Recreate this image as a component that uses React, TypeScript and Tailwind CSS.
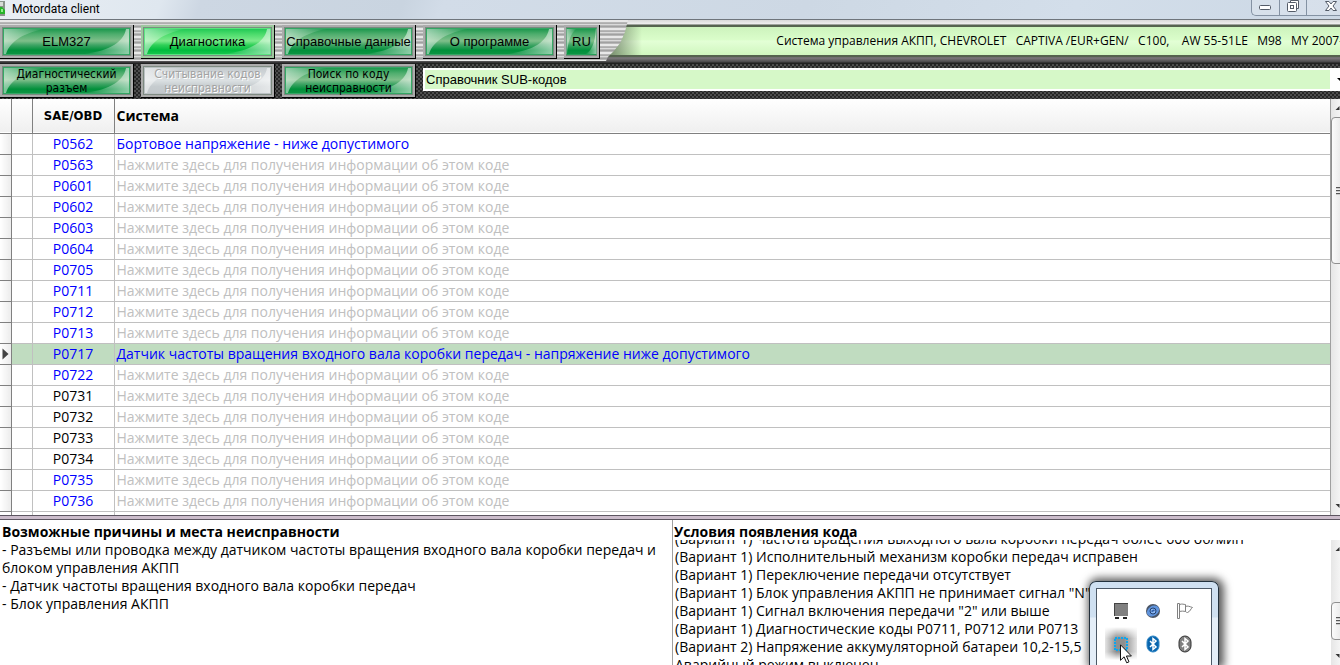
import React from "react";
import clsx from "clsx";

const HINT = "Нажмите здесь для получения информации об этом коде";

interface Row {
  code: string;
  text?: string;
  dark?: boolean;
  selected?: boolean;
}

const rows: Row[] = [
  { code: "P0562", text: "Бортовое напряжение - ниже допустимого" },
  { code: "P0563" },
  { code: "P0601" },
  { code: "P0602" },
  { code: "P0603" },
  { code: "P0604" },
  { code: "P0705" },
  { code: "P0711" },
  { code: "P0712" },
  { code: "P0713" },
  {
    code: "P0717",
    text: "Датчик частоты вращения входного вала коробки передач - напряжение ниже допустимого",
    selected: true,
  },
  { code: "P0722" },
  { code: "P0731", dark: true },
  { code: "P0732", dark: true },
  { code: "P0733", dark: true },
  { code: "P0734", dark: true },
  { code: "P0735" },
  { code: "P0736" },
];

const causes = [
  "- Разъемы или проводка между датчиком частоты вращения входного вала коробки передач и блоком управления АКПП",
  "- Датчик частоты вращения входного вала коробки передач",
  "- Блок управления АКПП",
];

const conditions = [
  "(Вариант 1) Частота вращения выходного вала коробки передач более 600 об/мин",
  "(Вариант 1) Исполнительный механизм коробки передач исправен",
  "(Вариант 1) Переключение передачи отсутствует",
  '(Вариант 1) Блок управления АКПП не принимает сигнал "N"',
  '(Вариант 1) Сигнал включения передачи "2" или выше',
  "(Вариант 1) Диагностические коды P0711, P0712 или P0713",
  "(Вариант 2) Напряжение аккумуляторной батареи 10,2-15,5",
  "Аварийный режим выключен",
];

const tones = {
  green: "bg-[linear-gradient(#0a8f40,#4fae6e_25%,#7fbf8a_48%,#3fa465_62%,#00903a_80%,#149647)]",
  active: "bg-[linear-gradient(#12c24c,#4cdc6c_25%,#7eea8c_48%,#2fd058_62%,#00bc3c_80%,#22cc55)]",
  disabled: "bg-[linear-gradient(#c2c8cb,#d2d7da_30%,#dbe0e2_50%,#c6cccf_70%,#c0c6ca)]",
};

interface GlossButtonProps {
  children: React.ReactNode;
  tone?: keyof typeof tones;
  className?: string;
  small?: boolean;
}

function GlossButton({ children, tone = "green", className, small }: GlossButtonProps) {
  return (
    <button
      disabled={tone === "disabled"}
      className={clsx("flex h-[34px] shrink-0 border-r border-b border-black", className)}
    >
      <span
        className={clsx(
          "relative flex h-full w-full items-center justify-center overflow-hidden border-2 pt-px shadow-[inset_0_0_0_1px_#7d8a80]",
          tone === "active" ? "border-[#9fc79f]" : "border-[#acacac]",
          tones[tone]
        )}
      >
        <svg
          viewBox="0 0 130 30"
          preserveAspectRatio="none"
          className="absolute inset-0 h-full w-full"
          aria-hidden="true"
        >
          <defs>
            <linearGradient id={`left-${tone}`} x1="0" x2="1">
              <stop offset="0" stopColor="#fff" stopOpacity="0.5" />
              <stop offset="1" stopColor="#fff" stopOpacity="0" />
            </linearGradient>
            <linearGradient id={`right-${tone}`} x1="0" x2="1">
              <stop offset="0" stopColor="#fff" stopOpacity="0" />
              <stop offset="1" stopColor="#fff" stopOpacity="0.55" />
            </linearGradient>
          </defs>
          <path d="M2 28V2h42C24 5 8 14 4 28z" fill={`url(#left-${tone})`} />
          <path d="M128 2v26H82c22-3 40-10 43-26z" fill={`url(#right-${tone})`} />
          <path
            d="M1.500 1.500h127v27h-127z"
            fill="none"
            stroke={tone === "disabled" ? "#b9bfc2" : tone === "active" ? "#5fe583" : "#36a866"}
          />
        </svg>
        <span
          className={clsx(
            "relative whitespace-nowrap",
            small
              ? "text-center font-['DejaVu_Sans_Condensed','DejaVu_Sans',sans-serif] text-[12px] leading-[14px]"
              : "font-['Liberation_Sans',Arial,sans-serif] text-[13px] leading-4",
            tone === "disabled" ? "text-[#a3a3a3] [text-shadow:1px_1px_0_#fff]" : "text-black"
          )}
        >
          {children}
        </span>
      </span>
    </button>
  );
}

function Scrollbar({ thumb }: { thumb: string }) {
  return (
    <div className="flex w-[9px] shrink-0 flex-col overflow-hidden bg-[linear-gradient(90deg,#e6e6e6,#f4f4f4)]">
      <svg width="9" height="18" viewBox="0 0 9 18" className="shrink-0">
        <path d="M4.500 11l4-4v4z" fill="#333" />
      </svg>
      <div
        className={clsx(
          "flex w-4 shrink-0 items-center rounded-sm border border-[#8f8f8f] bg-[linear-gradient(90deg,#fbfbfb,#e0e0e0)] pl-1",
          thumb
        )}
      >
        <svg width="8" height="8" viewBox="0 0 8 8">
          <path d="M0 .5h8M0 3.500h8M0 6.500h8" stroke="#555" />
          <path d="M0 1.500h8M0 4.500h8M0 7.500h8" stroke="#ccc" />
        </svg>
      </div>
      <svg width="9" height="18" viewBox="0 0 9 18" className="mt-auto shrink-0">
        <path d="M4.500 7l4 4V7z" fill="#333" />
      </svg>
    </div>
  );
}

function TitleBar() {
  return (
    <header className="flex h-5 shrink-0 items-start justify-between border-b border-[#6f757c] bg-[linear-gradient(110deg,#e9eef4_0,#dfe7ef_12%,#cdd7e3_15%,#c9d4e0_30%,#d2dce8_33%,#cdd8e4_60%,#d3deea_80%,#ccd8e5)]">
      <div className="flex items-center">
        <svg width="6" height="18" viewBox="0 0 6 18">
          <path d="M0 1h5v15H0z" fill="#8a948c" />
          <path d="M0 2h3v4H0z" fill="#d7dcd7" />
          <path d="M0 7h2l3 3v4H0z" fill="#27b32a" />
          <path d="M1 9h2v3H1z" fill="#8ff08a" />
        </svg>
        <h1 className="pl-[6px] font-[Roboto,'Open_Sans',sans-serif] text-[12px] leading-[18px] text-black">
          Motordata client
        </h1>
      </div>
      <div className="flex h-4 rounded-bl-[5px] border-b border-l border-[#8492a3] bg-white/20">
        <button aria-label="Свернуть" className="flex w-7 items-center justify-center border-r border-[#8492a3]">
          <svg width="13" height="6" viewBox="0 0 13 6">
            <rect x=".5" y=".5" width="11" height="4" rx="1" fill="#fff" stroke="#545c68" />
          </svg>
        </button>
        <button aria-label="Восстановить" className="flex w-[27px] items-start justify-center border-r border-[#8492a3]">
          <svg width="12" height="13" viewBox="0 0 12 13">
            <path d="M3.500 2.500v-2h8v8h-2" fill="#fff" stroke="#545c68" />
            <rect x=".5" y="2.500" width="9" height="9" rx="1" fill="#fff" stroke="#545c68" />
            <rect x="3.500" y="5.500" width="3" height="3" fill="#fff" stroke="#545c68" />
          </svg>
        </button>
        <button aria-label="Закрыть" className="flex w-[33px] items-start justify-end pr-[3px]">
          <svg width="12" height="12" viewBox="0 0 12 12">
            <path
              d="M.5 1.500h3.500l2 2.500 2-2.500h3.500L8 6l3.500 4.500H8L6 8l-2 2.500H.5L4 6z"
              fill="#fff"
              stroke="#545c68"
            />
          </svg>
        </button>
      </div>
    </header>
  );
}

function MainToolbar() {
  return (
    <div className="flex h-11 shrink-0 bg-[linear-gradient(#d9d9d9_0,#efefef_4px,#4f564c_5px,#6d7768_7px,#555_36px,#7c7a7c_38px,#4a484a_42px,#222_43px)]">
      <nav className="relative z-10 flex h-[41px] shrink-0 items-start gap-[7px] bg-[repeating-linear-gradient(#e8e8e8_0,#e8e8e8_2px,#bcbcbc_2px,#a8a8a8_4px,#dadada_4px,#dadada_5px,#969696_6px,#c2c2c2_8px)] pt-[5px] pr-7 [clip-path:polygon(0_0,100%_0,99.5%_30%,98.8%_55%,97.8%_75%,96.8%_90%,96.5%_100%,0_100%)]">
        <GlossButton className="w-[134px]">ELM327</GlossButton>
        <GlossButton className="w-[134px]" tone="active">Диагностика</GlossButton>
        <GlossButton className="w-[134px]">Справочные данные</GlossButton>
        <GlossButton className="w-[134px]">О программе</GlossButton>
        <GlossButton className="w-9">RU</GlossButton>
      </nav>
      <div className="mt-[5px] -ml-5 flex h-8 min-w-0 flex-1 items-center justify-end overflow-hidden border-y-2 border-[#55634f] bg-[linear-gradient(90deg,#00000066_4px,#0000_34px),linear-gradient(#cdf3bd,#dafdca_45%,#e3ffd6_50%,#d0f7bf)]">
        <p className="-mr-[3px] text-[12px] leading-5 whitespace-pre text-black">
          {"Система управления АКПП, CHEVROLET   CAPTIVA /EUR+GEN/   C100,    AW 55-51LE   M98   MY 2007-"}
        </p>
      </div>
    </div>
  );
}

function SubToolbar() {
  return (
    <div className="flex h-[35px] shrink-0 items-start gap-[7px] bg-[repeating-conic-gradient(#262626_0_25%,#4e4e4e_0_50%)] bg-[length:4px_4px]">
      <GlossButton className="w-[134px]" small>
        Диагностический
        <br />
        разъем
      </GlossButton>
      <GlossButton className="w-[134px]" tone="disabled" small>
        Считывание кодов
        <br />
        неисправности
      </GlossButton>
      <GlossButton className="w-[134px]" small>
        Поиск по коду
        <br />
        неисправности
      </GlossButton>
      <div className="mt-1 flex h-[23px] min-w-0 flex-1 items-stretch border-2 border-r-0 border-white bg-white">
        <select
          aria-label="Справочник"
          className="min-w-0 flex-1 appearance-none bg-[#d6f8c8] pl-px font-['Liberation_Sans',Arial,sans-serif] text-[13px] text-black outline-none"
        >
          <option>Справочник SUB-кодов</option>
        </select>
        <svg width="10" height="19" viewBox="0 0 10 19" className="shrink-0">
          <path d="M7 8h6l-3 3z" fill="#000" />
        </svg>
      </div>
    </div>
  );
}

function CodeTable() {
  return (
    <section className="flex shrink-0 bg-white">
      <div className="min-w-0 flex-1 border-r border-[#a0a0a0]">
        <table className="w-full table-fixed border-collapse">
          <colgroup>
            <col className="w-[11px]" />
            <col className="w-[21px]" />
            <col className="w-[82px]" />
            <col />
          </colgroup>
          <thead>
            <tr className="h-[34px] border-b border-[#808080] bg-[linear-gradient(#fff,#efefef)]">
              <th className="border-r border-[#808080]" />
              <th className="border-r border-[#808080]" />
              <th className="border-r border-[#808080] p-0 text-center font-['DejaVu_Sans_Condensed','DejaVu_Sans',sans-serif] text-[13px] font-bold">
                SAE/OBD
              </th>
              <th className="p-0 pl-[2px] text-left font-bold">Система</th>
            </tr>
          </thead>
          <tbody>
            {rows.map((row) => (
              <tr
                key={row.code}
                className={clsx(
                  "h-[21px] border-b border-[#c0c0c0] leading-5",
                  row.selected && "bg-[#c0dcc0]"
                )}
              >
                <td className="border-r border-b border-[#808080] bg-[linear-gradient(90deg,#fff,#ececec)] p-0">
                  {row.selected && (
                    <svg width="7" height="12" viewBox="0 0 7 12" className="ml-[2px]">
                      <path d="M.5.5v11l6-5.500z" fill="#444" />
                    </svg>
                  )}
                </td>
                <td className="border-r border-[#c0c0c0] p-0" />
                <td
                  className={clsx(
                    "border-r border-[#c0c0c0] p-0 text-center",
                    row.dark ? "text-black" : "text-[#0000ff]"
                  )}
                >
                  {row.code}
                </td>
                <td
                  className={clsx(
                    "overflow-hidden p-0 pl-[2px] whitespace-nowrap",
                    row.text ? "text-[#0000ff]" : "text-[#c0c0c0]"
                  )}
                >
                  {row.text ?? HINT}
                </td>
              </tr>
            ))}
            <tr className="h-1">
              <td className="border-r border-[#808080] p-0" />
              <td className="border-r border-[#c0c0c0] p-0" />
              <td className="border-r border-[#c0c0c0] p-0" />
              <td className="p-0" />
            </tr>
          </tbody>
        </table>
      </div>
      <Scrollbar thumb="h-[147px]" />
    </section>
  );
}

function Bluetooth({ body, edge }: { body: string; edge: string }) {
  return (
    <svg width="14" height="18" viewBox="0 0 14 18">
      <rect x="1" y="1" width="12" height="16" rx="6" fill={body} stroke={edge} />
      <path d="M4 6l6 6-3 2.500v-11L10 6l-6 6" fill="none" stroke="#fff" strokeWidth="1.500" />
    </svg>
  );
}

function TrayPopup() {
  const cell = "flex h-[33px] w-8 items-center justify-center";
  return (
    <aside className="absolute right-[121px] bottom-0 z-20 h-[84px] w-[130px] rounded-t-[7px] border border-b-0 border-[#22303c] bg-[linear-gradient(#cfe0f1_0,#cfe0f1_35px,#e4eef8_36px)] px-[6px] pt-[6px] shadow-[2px_0_9px_3px_rgba(0,0,0,0.65)]">
      <div className="relative grid h-full grid-cols-[32px_32px_32px] content-start border border-b-0 border-[#4c5866] bg-white pt-[5px] pl-2">
        <button aria-label="Дисплей" className={cell}>
          <svg width="16" height="18" viewBox="0 0 16 18">
            <path d="M1 2h14v12H1z" fill="#808080" />
            <path d="M1 1.500h14M1.500 2v12" stroke="#444" />
            <path d="M2 15h4v2H2zM10 15h4v2h-4z" fill="#222" />
          </svg>
        </button>
        <button aria-label="Сервис" className={cell}>
          <svg width="16" height="16" viewBox="0 0 16 16">
            <circle cx="8" cy="8" r="7" fill="#4a5566" />
            <ellipse cx="8" cy="8" rx="6.500" ry="5" transform="rotate(-35 8 8)" fill="#5f93dc" />
            <circle cx="8" cy="8" r="3" fill="#8db8f2" stroke="#22406e" />
            <path d="M6.500 8.500l3-1.500" stroke="#2d5ca6" strokeWidth="1.500" />
          </svg>
        </button>
        <button aria-label="Центр поддержки" className={cell}>
          <svg width="18" height="18" viewBox="0 0 18 18">
            <path
              d="M1.500 1.500h2v15h-2zM3.500 2.500c3-1 4 0 6 0v2c2-1 4 0 7 1-2 1-2 4-5 5-1 .5-1.500-1-2-1-2-.5-4-.5-6 0z"
              fill="#fff"
              stroke="#808080"
            />
            <path d="M9.500 4v5.500" stroke="#808080" />
          </svg>
        </button>
        <button
          aria-label="Снимок экрана"
          className={clsx(
            cell,
            "bg-[linear-gradient(#fff,#fff0_35%,#fff0_75%,#fff),linear-gradient(90deg,#e4e4e4,#8f8f8f_35%,#8f8f8f_60%,#e4e4e4)]"
          )}
        >
          <svg width="16" height="16" viewBox="0 0 16 16">
            <rect x="2" y="2" width="12" height="12" fill="none" stroke="#0ba6ef" strokeWidth="2" strokeDasharray="2 1" />
          </svg>
        </button>
        <button aria-label="Bluetooth" className={cell}>
          <Bluetooth body="#0a66ae" edge="#2f86c6" />
        </button>
        <button aria-label="Bluetooth отключен" className={cell}>
          <Bluetooth body="#808080" edge="#333" />
        </button>
        <svg width="13" height="20" viewBox="0 0 13 20" className="absolute top-[55px] left-[23px]">
          <path d="M.5.8v15.500l3.600-3.500 2.600 6 2.300-1-2.600-5.800h5z" fill="#fff" stroke="#111" />
        </svg>
      </div>
    </aside>
  );
}

export default function App() {
  return (
    <main className="relative flex h-screen flex-col overflow-hidden bg-white font-['Open_Sans','Noto_Sans',sans-serif] text-[14px] leading-[18px] text-black">
      <TitleBar />
      <MainToolbar />
      <SubToolbar />
      <CodeTable />
      <div className="h-[5px] shrink-0 border-y border-[#5c5560] bg-[#cbbccb]" />
      <div className="grid min-h-0 flex-1 grid-cols-[672fr_668fr]">
        <section className="pt-[3px] pr-1 pl-[2px]">
          <h2 className="font-bold">Возможные причины и места неисправности</h2>
          {causes.map((line) => (
            <p key={line}>{line}</p>
          ))}
        </section>
        <section className="flex min-h-0 flex-col border-l border-[#a0a0a0] pt-[3px]">
          <h2 className="h-[17px] shrink-0 pl-px font-bold">Условия появления кода</h2>
          <div className="flex min-h-0 flex-1">
            <div className="min-w-0 flex-1 overflow-hidden pl-[2px] whitespace-nowrap">
              <div className="-mt-[10px]">
                {conditions.map((line) => (
                  <p key={line}>{line}</p>
                ))}
              </div>
            </div>
            <Scrollbar thumb="mt-11 h-[38px]" />
          </div>
        </section>
      </div>
      <TrayPopup />
    </main>
  );
}
